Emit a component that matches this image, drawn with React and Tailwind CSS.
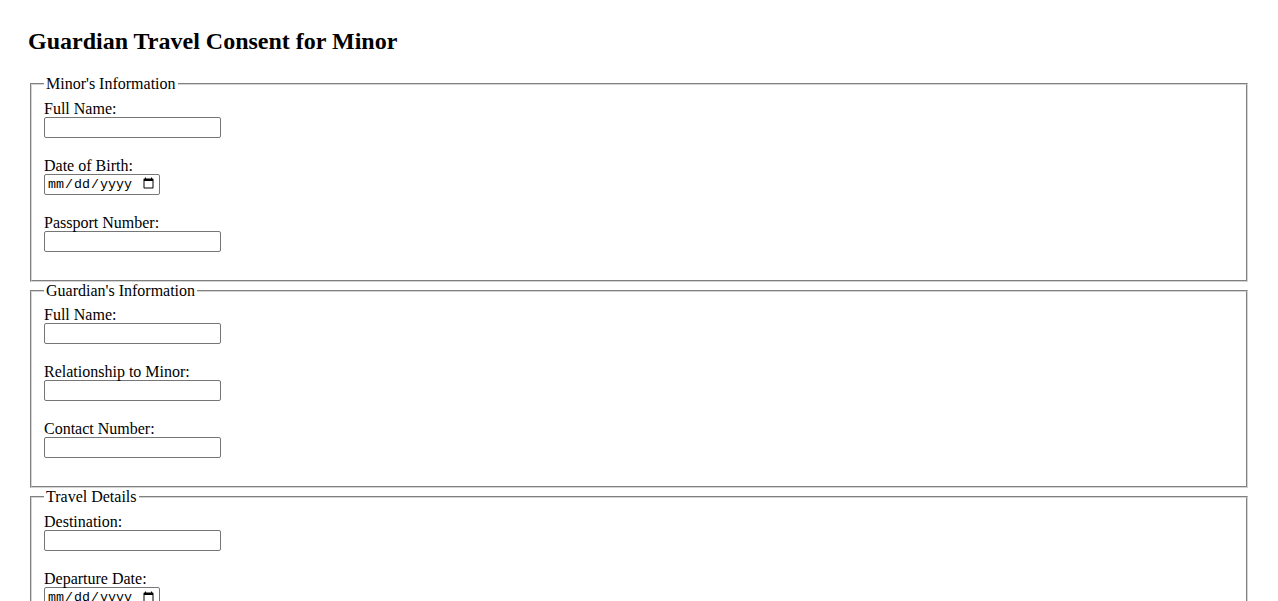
import React from "react";

const sections = [
  {
    legend: "Minor's Information",
    fields: [
      { id: "minorName", label: "Full Name:", type: "text" },
      { id: "minorDob", label: "Date of Birth:", type: "date" },
      { id: "minorPassport", label: "Passport Number:", type: "text" },
    ],
  },
  {
    legend: "Guardian's Information",
    fields: [
      { id: "guardianName", label: "Full Name:", type: "text" },
      { id: "relationship", label: "Relationship to Minor:", type: "text" },
      { id: "contact", label: "Contact Number:", type: "text" },
    ],
  },
  {
    legend: "Travel Details",
    fields: [
      { id: "destination", label: "Destination:", type: "text" },
      { id: "departure", label: "Departure Date:", type: "date" },
      { id: "return", label: "Return Date:", type: "date" },
    ],
  },
];

const Field = ({ field }) => (
  <div className="mb-[19px]">
    <label htmlFor={field.id} className="block h-[17px] leading-[18.4px]">
      {field.label}
    </label>
    {field.type === "date" ? (
      <input
        id={field.id}
        type="date"
        className="block w-[116px] h-[21px] px-[2px] py-[1px] border border-[#767676] rounded-[2px] bg-white text-[13.33px] leading-[15px] text-black font-['Liberation_Mono',monospace]"
      />
    ) : (
      <input
        id={field.id}
        type="text"
        className="block w-[177px] h-[21px] px-[2px] py-[1px] border border-[#767676] rounded-[2px] bg-white text-[13.33px] font-['Liberation_Sans',Arial,sans-serif]"
      />
    )}
  </div>
);

export default function App() {
  return (
    <div className="min-h-screen bg-white text-black text-base font-['Liberation_Serif','Times_New_Roman',serif] pt-[28px] px-[28px] pb-[28px]">
      <h2 className="m-0 mb-[19.5px] text-[24px] leading-[27.6px] font-bold">
        Guardian Travel Consent for Minor
      </h2>

      <form>
        {sections.map((section) => (
          <fieldset
            key={section.legend}
            className="mx-[2px] px-[12px] pt-[6.1px] pb-[9.1px] border-2 [border-style:groove] border-[#d4d4d4]"
          >
            <legend className="px-[2px] leading-[18.4px]">{section.legend}</legend>
            {section.fields.map((field) => (
              <Field key={field.id} field={field} />
            ))}
          </fieldset>
        ))}
      </form>
    </div>
  );
}
